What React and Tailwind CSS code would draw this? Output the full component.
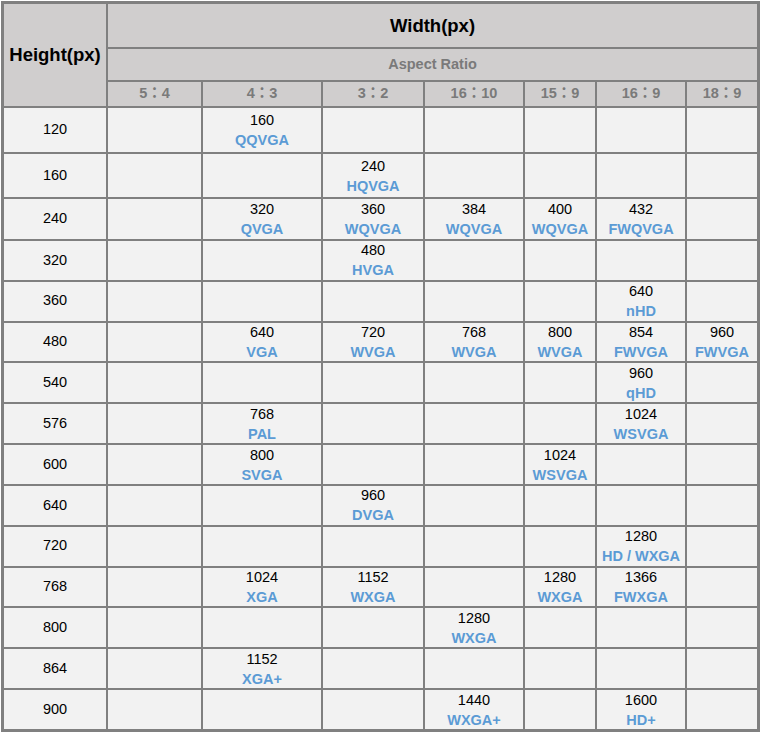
import React from "react";

const ratios = ["5：4", "4：3", "3：2", "16：10", "15：9", "16：9", "18：9"];

const rows = [
  ["120", { 1: ["160", "QQVGA"] }],
  ["160", { 2: ["240", "HQVGA"] }],
  ["240", { 1: ["320", "QVGA"], 2: ["360", "WQVGA"], 3: ["384", "WQVGA"], 4: ["400", "WQVGA"], 5: ["432", "FWQVGA"] }],
  ["320", { 2: ["480", "HVGA"] }],
  ["360", { 5: ["640", "nHD"] }],
  ["480", { 1: ["640", "VGA"], 2: ["720", "WVGA"], 3: ["768", "WVGA"], 4: ["800", "WVGA"], 5: ["854", "FWVGA"], 6: ["960", "FWVGA"] }],
  ["540", { 5: ["960", "qHD"] }],
  ["576", { 1: ["768", "PAL"], 5: ["1024", "WSVGA"] }],
  ["600", { 1: ["800", "SVGA"], 4: ["1024", "WSVGA"] }],
  ["640", { 2: ["960", "DVGA"] }],
  ["720", { 5: ["1280", "HD / WXGA"] }],
  ["768", { 1: ["1024", "XGA"], 2: ["1152", "WXGA"], 4: ["1280", "WXGA"], 5: ["1366", "FWXGA"] }],
  ["800", { 3: ["1280", "WXGA"] }],
  ["864", { 1: ["1152", "XGA+"] }],
  ["900", { 3: ["1440", "WXGA+"], 5: ["1600", "HD+"] }],
];

export default function App() {
  return (
    <div className="min-h-[732px] w-[760px] bg-white pt-[1px] pl-[1px] font-['Liberation_Sans',Arial,'Noto_Sans_CJK_JP',sans-serif]">
      <div className="grid h-[731px] w-[759px] gap-[2px] border-[3px] border-[#808080] bg-[#808080] grid-cols-[102px_93px_118px_100px_98px_70px_88px_70px] grid-rows-[43px_31px_24px_44px_43px_40px_repeat(12,minmax(0,1fr))]">
        <div className="row-span-3 flex items-center justify-center bg-[#d0cece] text-[18.5px] font-bold text-black">Height(px)</div>
        <div className="col-span-7 flex items-center justify-center bg-[#d0cece] text-[18.5px] font-bold text-black">Width(px)</div>
        <div className="col-span-7 flex items-center justify-center bg-[#d0cece] text-[14.5px] font-bold text-[#7a7a7a]">Aspect Ratio</div>
        {ratios.map((r) => (
          <div key={r} className="flex items-center justify-center bg-[#d0cece] text-[14.5px] font-bold text-[#7a7a7a] font-['Liberation_Sans','Noto_Sans_CJK_JP',sans-serif]">
            {r}
          </div>
        ))}
        {rows.map(([h, cells]) => (
          <React.Fragment key={h}>
            <div className="flex items-center justify-center bg-[#f2f2f2] text-[14.5px] text-black">{h}</div>
            {ratios.map((_, i) => {
              const c = cells[i];
              return (
                <div key={i} className="flex flex-col items-center justify-center bg-[#f2f2f2] leading-[20px]">
                  {c && (
                    <>
                      <span className="text-[14.5px] text-black">{c[0]}</span>
                      <span className="text-[14.5px] font-bold text-[#5b9bd5]">{c[1]}</span>
                    </>
                  )}
                </div>
              );
            })}
          </React.Fragment>
        ))}
      </div>
    </div>
  );
}
